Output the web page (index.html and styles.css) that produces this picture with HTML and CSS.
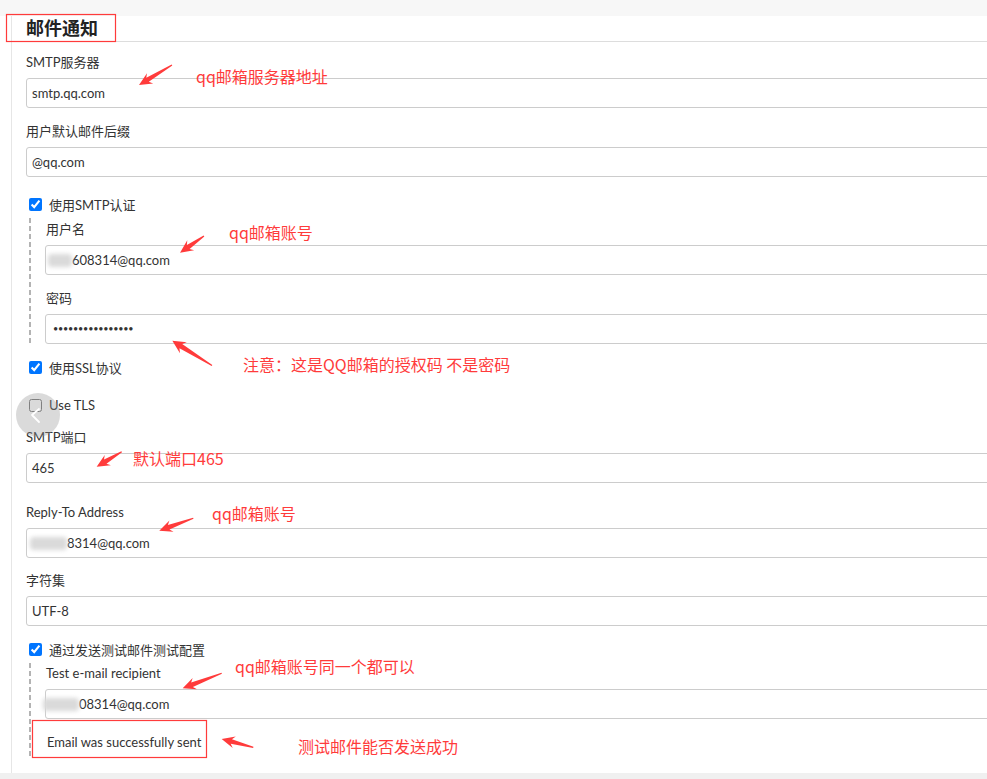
FILE: index.html
```html
<!DOCTYPE html>
<html lang="zh-CN">
<head>
<meta charset="utf-8">
<title>邮件通知</title>
<link rel="stylesheet" href="styles.css">
</head>
<body>
<div class="topband"></div>
<div class="panel">
  <div class="section-head"><h2>邮件通知</h2></div>
  <div class="form">
    <div class="field f-smtp">
      <div class="label">SMTP服务器</div>
      <div class="input">smtp.qq.com</div>
    </div>
    <div class="field f-suffix">
      <div class="label">用户默认邮件后缀</div>
      <div class="input">@qq.com</div>
    </div>
    <label class="check c-auth"><input type="checkbox" checked><span>使用SMTP认证</span></label>
    <div class="group g-auth">
      <div class="field">
        <div class="label">用户名</div>
        <div class="input"><span class="mask m-user"></span>608314@qq.com</div>
      </div>
      <div class="field f-pass">
        <div class="label">密码</div>
        <div class="input pass">••••••••••••••••</div>
      </div>
    </div>
    <label class="check c-ssl"><input type="checkbox" checked><span>使用SSL协议</span></label>
    <label class="check c-tls"><input type="checkbox"><span>Use TLS</span></label>
    <div class="field f-port">
      <div class="label">SMTP端口</div>
      <div class="input">465</div>
    </div>
    <div class="field f-reply">
      <div class="label">Reply-To Address</div>
      <div class="input"><span class="mask m-reply"></span>8314@qq.com</div>
    </div>
    <div class="field f-charset">
      <div class="label">字符集</div>
      <div class="input">UTF-8</div>
    </div>
    <label class="check c-test"><input type="checkbox" checked><span>通过发送测试邮件测试配置</span></label>
    <div class="group g-test">
      <div class="field">
        <div class="label">Test e-mail recipient</div>
        <div class="input"><span class="mask m-test"></span>08314@qq.com</div>
      </div>
      <div class="message">Email was successfully sent</div>
    </div>
  </div>
</div>
<div class="bottomband"></div>

<div class="annot">
  <svg class="annot-svg" width="987" height="779" viewBox="0 0 987 779" xmlns="http://www.w3.org/2000/svg">
    <rect x="6.5" y="14.5" width="109" height="27" fill="none" stroke="#ff3b3b" stroke-width="1.2"/>
    <rect x="32.5" y="720.5" width="174" height="37" fill="none" stroke="#ff3b3b" stroke-width="1.2"/>
    <g fill="#ff3b3b">
      <polygon transform="translate(172 65) rotate(148.8)" points="0,-0.6 28.6,-2.4 25.6,-6 38.6,0 25.6,6 28.6,2.4 0,0.6"/>
      <polygon transform="translate(204 236) rotate(145.2)" points="0,-0.6 19.2,-2.4 16.2,-6 29.2,0 16.2,6 19.2,2.4 0,0.6"/>
      <polygon transform="translate(212 365.5) rotate(-148.1)" points="0,-0.6 36.7,-2.6 33.7,-6.5 46.7,0 33.7,6.5 36.7,2.6 0,0.6"/>
      <polygon transform="translate(121.7 451.7) rotate(149)" points="0,-0.6 19.2,-2.4 16.2,-6 29.2,0 16.2,6 19.2,2.4 0,0.6"/>
      <polygon transform="translate(193.3 518.3) rotate(160)" points="0,-0.6 26.2,-2.4 23.2,-6 36.2,0 23.2,6 26.2,2.4 0,0.6"/>
      <polygon transform="translate(221.7 673.3) rotate(159)" points="0,-0.6 31.8,-2.4 28.8,-6 41.8,0 28.8,6 31.8,2.4 0,0.6"/>
      <polygon transform="translate(253.3 747.3) rotate(-165.3)" points="0,-0.6 22.7,-2.4 19.7,-6 32.7,0 19.7,6 22.7,2.4 0,0.6"/>
    </g>
  </svg>
  <span class="note n1">qq邮箱服务器地址</span>
  <span class="note n2">qq邮箱账号</span>
  <span class="note n3">注意：这是QQ邮箱的授权码 不是密码</span>
  <span class="note n4">默认端口465</span>
  <span class="note n5">qq邮箱账号</span>
  <span class="note n6">qq邮箱账号同一个都可以</span>
  <span class="note n7">测试邮件能否发送成功</span>
  <div class="back-btn">
    <svg width="44" height="44" viewBox="0 0 44 44" xmlns="http://www.w3.org/2000/svg"><polyline points="23,16 16,22 23,29" fill="none" stroke="#ffffff" stroke-width="1.8" stroke-linecap="round" stroke-linejoin="round"/></svg>
  </div>
</div>
</body>
</html>
```

FILE: styles.css
```css
html, body {
  margin: 0;
  padding: 0;
  background: #ffffff;
  overflow: hidden;
}
body {
  width: 987px;
  height: 779px;
  position: relative;
  font-family: "Lato", "Noto Sans CJK SC", sans-serif;
  font-size: 13px;
  color: #333333;
}
.topband {
  height: 16px;
  background: #f7f7f7;
}
.bottomband {
  height: 6px;
  background: #f0f0f0;
}
.panel {
  margin-left: 11px;
  margin-right: -30px;
  border-left: 1px solid #e6e6e6;
  height: 757px;
  overflow: hidden;
}
.section-head {
  height: 25px;
  border-bottom: 1px solid #dddddd;
  padding-left: 14px;
}
.section-head h2 {
  margin: 0;
  font-size: 18px;
  line-height: 25px;
  font-weight: bold;
  color: #222222;
}
.form {
  padding-left: 14px;
  padding-top: 11px;
}
.field + .field { margin-top: 14px; }
.label {
  line-height: 18px;
  margin-bottom: 7px;
  color: #333333;
}
.input {
  box-sizing: border-box;
  height: 30px;
  border: 1px solid #cccccc;
  border-radius: 3px;
  padding: 0 5px;
  line-height: 28px;
  color: #333333;
  white-space: nowrap;
}
.input.pass {
  font-size: 9px;
  letter-spacing: -0.2px;
  padding-left: 7px;
}
.mask {
  display: inline-block;
  height: 13px;
  vertical-align: -2px;
  background: #dadada;
  border-radius: 4px;
  filter: blur(2px);
}
.m-user { width: 24px; margin-left: -3px; }
.m-reply { width: 37px; margin-left: -2px; }
.m-test { width: 36px; margin-left: -8px; }

.check {
  display: flex;
  align-items: center;
  height: 20px;
  color: #333333;
}
.check input {
  width: 13px;
  height: 13px;
  margin: 0 7px 0 3px;
}
.c-auth { margin-top: 17px; }
.c-ssl { margin-top: 12px; }
.c-tls { margin-top: 18px; }
.c-test { margin-top: 13px; }
.f-port { margin-top: 13px; }
.field.f-reply { margin-top: 20px; }
.field.f-charset { margin-top: 13px; }

.group {
  margin-left: 3px;
  padding-left: 16px;
  background-image: repeating-linear-gradient(to bottom, #b3b3b3 0, #b3b3b3 5px, transparent 5px, transparent 8px);
  background-size: 2px 100%;
  background-repeat: no-repeat;
  background-position: 0 0;
}
.group .label { padding-left: 1px; }
.g-auth {
  margin-top: 4px;
  padding-top: 2px;
  padding-bottom: 1px;
}
.g-test {
  margin-top: 4px;
  padding-top: 1px;
  padding-bottom: 7px;
}
.message {
  margin-top: 14px;
  padding-left: 2px;
  line-height: 18px;
  color: #333333;
}

.annot {
  position: absolute;
  left: 0;
  top: 0;
  width: 987px;
  height: 779px;
  pointer-events: none;
}
.annot-svg {
  position: absolute;
  left: 0;
  top: 0;
}
.note {
  position: absolute;
  font-family: "Noto Sans CJK SC", "Lato", sans-serif;
  font-size: 16px;
  line-height: 20px;
  color: #ff3b3b;
  white-space: nowrap;
}
.n1 { left: 196px; top: 66px; }
.n2 { left: 229px; top: 222px; }
.n3 { left: 243px; top: 354px; }
.n4 { left: 133px; top: 448px; }
.n5 { left: 212px; top: 503px; }
.n6 { left: 235px; top: 656px; }
.n7 { left: 298px; top: 736px; }
.back-btn {
  position: absolute;
  left: 16px;
  top: 393px;
  width: 44px;
  height: 44px;
  border-radius: 50%;
  background: rgba(150, 150, 150, 0.35);
}
.back-btn svg { display: block; }
```
